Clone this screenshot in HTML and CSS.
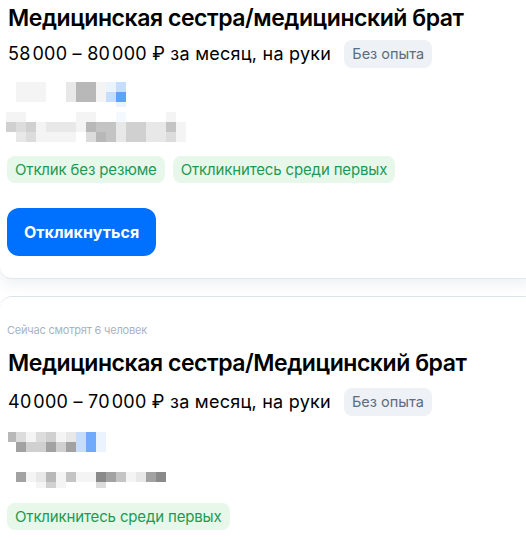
FILE: index.html
```html
<!DOCTYPE html>
<html lang="ru">
<head>
<meta charset="utf-8">
<link rel="stylesheet" href="styles.css">
</head>
<body>
<div class="list">
  <section class="card card-first">
    <h2 class="title">Медицинская сестра/медицинский брат</h2>
    <div class="salary-row">
      <span class="salary">58&#8202;000 – 80&#8202;000 ₽ за месяц, на руки</span>
      <span class="exp">Без опыта</span>
    </div>
    <div class="blur blur-a1">
      <i class="s1"></i><i class="s1"></i><i class="s1"></i><i class="s0"></i><i class="s0"></i><i class="s2"></i><i class="s6"></i><i class="s6"></i><i class="s1"></i><i class="b1"></i><i class="b2"></i>
      <i class="s1"></i><i class="s1"></i><i class="s1"></i><i class="s0"></i><i class="s0"></i><i class="s2"></i><i class="s6"></i><i class="s6"></i><i class="s1"></i><i class="b2"></i><i class="b4"></i>
      <i class="s0"></i><i class="s0"></i><i class="s0"></i><i class="s0"></i><i class="s0"></i><i class="s0"></i><i class="s0"></i><i class="s0"></i><i class="s0"></i><i class="s0"></i><i class="b1"></i>
    </div>
    <div class="blur blur-a2">
      <i class="s1"></i><i class="s1"></i><i class="s0"></i><i class="s0"></i><i class="s0"></i><i class="s0"></i><i class="s0"></i><i class="s1"></i><i class="s1"></i><i class="s0"></i><i class="s0"></i><i class="b0"></i><i class="s0"></i><i class="s0"></i><i class="s0"></i><i class="s0"></i><i class="s1"></i><i class="s0"></i>
      <i class="s4"></i><i class="s3"></i><i class="s4"></i><i class="s1"></i><i class="s2"></i><i class="s2"></i><i class="s2"></i><i class="s1"></i><i class="s6"></i><i class="s5"></i><i class="s5"></i><i class="s2"></i><i class="s4"></i><i class="s4"></i><i class="s2"></i><i class="s2"></i><i class="s5"></i><i class="s1"></i>
      <i class="s0"></i><i class="s2"></i><i class="s3"></i><i class="s1"></i><i class="s1"></i><i class="s1"></i><i class="s1"></i><i class="s0"></i><i class="s3"></i><i class="s6"></i><i class="s5"></i><i class="s2"></i><i class="s4"></i><i class="s4"></i><i class="s2"></i><i class="s2"></i><i class="s3"></i><i class="s1"></i>
    </div>
    <div class="tags">
      <span class="tag">Отклик без резюме</span>
      <span class="tag">Откликнитесь среди первых</span>
    </div>
    <button class="btn">Откликнуться</button>
  </section>
  <section class="card card-second">
    <div class="viewers">Сейчас смотрят 6 человек</div>
    <h2 class="title">Медицинская сестра/Медицинский брат</h2>
    <div class="salary-row">
      <span class="salary">40&#8202;000 – 70&#8202;000 ₽ за месяц, на руки</span>
      <span class="exp">Без опыта</span>
    </div>
    <div class="blur blur-b1">
      <i class="s6"></i><i class="s3"></i><i class="s1"></i><i class="s3"></i><i class="s4"></i><i class="s1"></i><i class="s2"></i><i class="b2"></i><i class="b3"></i><i class="b1"></i>
      <i class="s0"></i><i class="s7"></i><i class="s4"></i><i class="s4"></i><i class="s7"></i><i class="s4"></i><i class="s7"></i><i class="b2"></i><i class="b3"></i><i class="b1"></i>
    </div>
    <div class="blur blur-b2">
      <i class="s7"></i><i class="s1"></i><i class="s2"></i><i class="s6"></i><i class="s1"></i><i class="s5"></i><i class="s1"></i><i class="s1"></i><i class="s8"></i><i class="s7"></i><i class="s5"></i><i class="s1"></i><i class="s2"></i><i class="s7"></i><i class="s8"></i>
      <i class="s0"></i><i class="s0"></i><i class="s1"></i><i class="s4"></i><i class="s1"></i><i class="s0"></i><i class="s0"></i><i class="s0"></i><i class="s3"></i><i class="s0"></i><i class="s0"></i><i class="s0"></i><i class="s0"></i><i class="s0"></i><i class="s0"></i>
    </div>
    <div class="tags">
      <span class="tag">Откликнитесь среди первых</span>
    </div>
  </section>
</div>
</body>
</html>
```
FILE: styles.css
```css
* { box-sizing: border-box; }
html, body { margin: 0; padding: 0; }
body {
  background: #ffffff;
  font-family: Inter, "Noto Sans", Arial, sans-serif;
  color: #000;
  width: 526px;
  height: 540px;
  overflow: hidden;
}
.list {
  display: flex;
  flex-direction: column;
  gap: 17px;
}
.card {
  background: #fff;
  padding: 0 7px;
  display: flex;
  flex-direction: column;
  align-items: flex-start;
  width: 535px;
}
.card-first {
  border-radius: 0 0 12px 12px;
  border-bottom: 1px solid #e3e7ee;
  box-shadow: 0 6px 14px rgba(20, 50, 90, 0.07);
  padding-top: 3px;
  padding-bottom: 22px;
}
.card-second {
  border-top: 1px solid #dde3ea;
  border-radius: 12px 12px 0 0;
  padding-top: 25px;
}
.title {
  margin: 0;
  font-size: 23px;
  font-weight: 600;
  line-height: 30px;
  letter-spacing: -0.45px;
  padding-left: 1px;
}
.salary-row {
  display: flex;
  align-items: center;
  gap: 13px;
  margin-top: 7px;
  padding-left: 1px;
}
.card-second .salary-row { margin-top: 10px; }
.salary {
  font-size: 18px;
  line-height: 24px;
  letter-spacing: 0.25px;
}
.exp {
  background: #eef1f5;
  color: #5e6c7b;
  font-size: 14.5px;
  line-height: 28px;
  padding: 0 8px;
  border-radius: 8px;
}
.blur {
  display: grid;
  grid-auto-rows: 10px;
}
.blur i { display: block; }
.blur-a1 {
  grid-template-columns: repeat(11, 10px);
  grid-template-rows: 10px 10px 5px;
  margin: 14px 0 0 9px;
}
.blur-a2 {
  grid-template-columns: repeat(18, 10px);
  margin: 5px 0 0 -1px;
}
.blur-b1 {
  grid-template-columns: 8px repeat(9, 10px);
  margin: 16px 0 0 1px;
}
.blur-b2 {
  grid-template-columns: repeat(15, 10px);
  grid-template-rows: 10px 6px;
  margin: 20px 0 0 9px;
}
.s0 { background: #fff; }
.s1 { background: #f4f4f4; }
.s2 { background: #e8e8e8; }
.s3 { background: #dcdcdc; }
.s4 { background: #d0d0d0; }
.s5 { background: #c4c4c4; }
.s6 { background: #b8b8b8; }
.s7 { background: #a2a2a2; }
.s8 { background: #8a8a8a; }
.b0 { background: #f4f8ff; }
.b1 { background: #ebf3ff; }
.b2 { background: #c7ddfd; }
.b3 { background: #70abfb; }
.b4 { background: #60a2f9; }
.tags {
  display: flex;
  gap: 8px;
  margin-top: 14px;
}
.card-second .tags { margin-top: 15px; }
.tag {
  background: #e7f7ea;
  color: #1c9a52;
  font-size: 15px;
  line-height: 27px;
  letter-spacing: -0.15px;
  padding: 0 8px;
  border-radius: 8px;
}
.btn {
  margin-top: 25px;
  background: #0070ff;
  color: #fff;
  border: 0;
  border-radius: 12px;
  height: 48px;
  padding: 0 17px;
  font-family: inherit;
  font-size: 16px;
  font-weight: 700;
}
.viewers {
  font-size: 11px;
  line-height: 16px;
  letter-spacing: -0.2px;
  color: #a7b3c1;
  margin-bottom: 10px;
}
```
